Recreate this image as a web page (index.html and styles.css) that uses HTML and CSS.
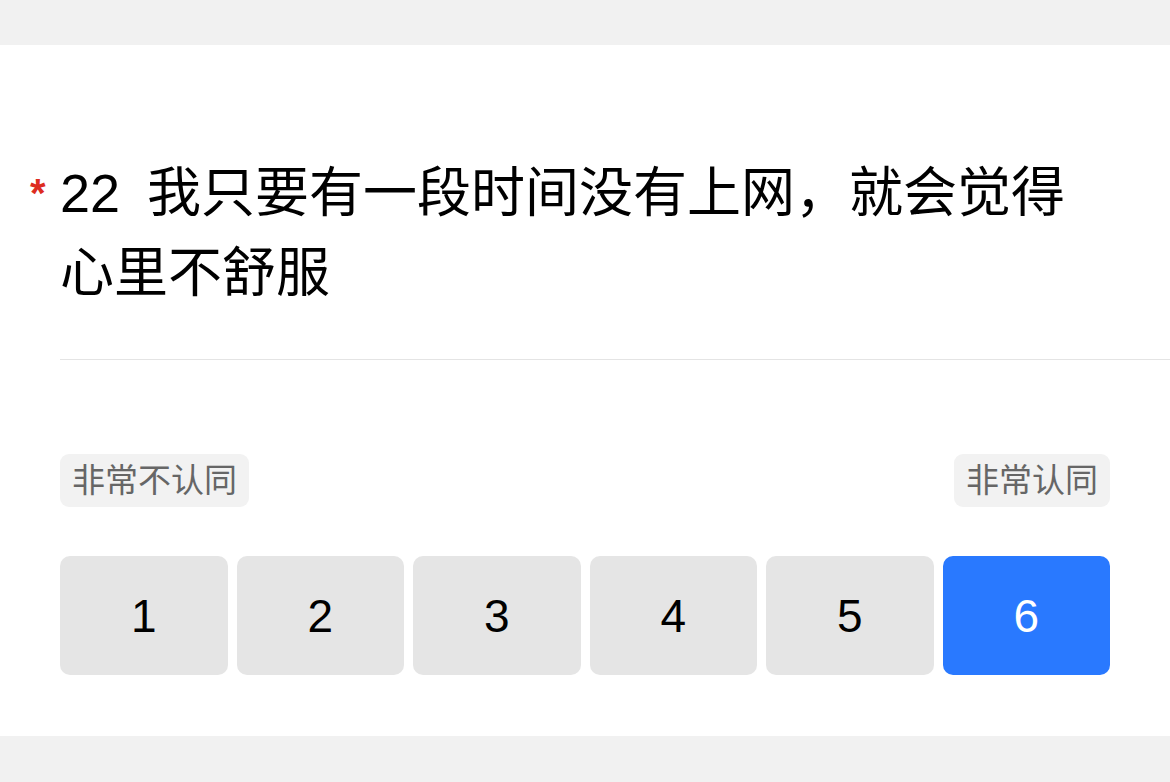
FILE: index.html
```html
<!DOCTYPE html>
<html lang="zh-CN">

<head>
    <meta charset="UTF-8">
    <meta name="viewport" content="width=device-width, initial-scale=1.0">
    <title>问卷</title>

    <link rel="stylesheet" href="styles.css">
</head>

<body>
    <div class="card">
        <div class="question"><span class="required">*</span>22&ensp;我只要有一段时间没有上网，就会觉得心里不舒服</div>
        <div class="divider"></div>

        <div class="scale">
            <div class="labels">
                <span class="tag">非常不认同</span>
                <span class="tag">非常认同</span>
            </div>
            <div class="options">
                <button class="option">1</button>
                <button class="option">2</button>
                <button class="option">3</button>
                <button class="option">4</button>
                <button class="option">5</button>
                <button class="option selected">6</button>
            </div>
        </div>
    </div>
</body>

</html>
```

FILE: styles.css
```css
body {
    margin: 0;
    background-color: #f1f1f1;
    font-family: "Liberation Sans", "Noto Sans CJK SC", sans-serif;
    color: #000;
}

.card {
    margin-top: 45px;
    height: 691px;
    box-sizing: border-box;
    padding: 108px 0 0 60px;
    background-color: #fff;
}

.question {
    position: relative;
    padding-right: 60px;
    font-size: 54px;
    line-height: 80px;
}

/* red star before required questions */
.required {
    position: absolute;
    left: -30px;
    top: 20px;
    color: #dd2c1f;
    font-size: 40px;
    font-weight: bold;
    line-height: 40px;
}

.divider {
    margin-top: 46px;
    height: 1px;
    background-color: #e4e4e4;
}

.scale {
    padding: 94px 60px 0 0;
}

.labels {
    display: flex;
    justify-content: space-between;
}

.tag {
    padding: 10px 12px;
    font-size: 33px;
    line-height: 33px;
    color: #666;
    background-color: #f2f2f2;
    border-radius: 9px;
}

.options {
    display: grid;
    grid-template-columns: repeat(6, 1fr);
    gap: 9px;
    margin-top: 49px;
}

.option {
    height: 119px;
    padding: 0;
    font-family: inherit;
    font-size: 46px;
    color: #000;
    background-color: #e5e5e5;
    border: none;
    border-radius: 10px;
}

.option.selected {
    color: #fff;
    background-color: #2979ff;
}
```
